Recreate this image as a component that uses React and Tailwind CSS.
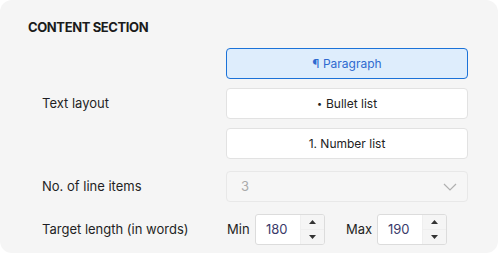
import React from "react";

function Spinner() {
  return (
    <div className="flex flex-col w-[24px] self-stretch bg-[#f5f5f5] border-l border-[#efefef]">
      <div className="flex-1 flex items-center justify-center">
        <svg width="7" height="4" viewBox="0 0 7 4"><path d="M0 4 L3.5 0 L7 4 Z" fill="#333" /></svg>
      </div>
      <div className="flex-1 flex items-center justify-center border-t border-[#efefef]">
        <svg width="7" height="4" viewBox="0 0 7 4"><path d="M0 0 L3.5 4 L7 0 Z" fill="#333" /></svg>
      </div>
    </div>
  );
}

function NumInput({ value }) {
  return (
    <div className="flex h-[31px] w-[70px] items-stretch rounded-[3px] border border-[#dcdcdc] bg-white overflow-hidden">
      <div className="flex-1 flex items-center pl-[10px] text-[13px] text-[#3a3a6a]">{value}</div>
      <Spinner />
    </div>
  );
}

export default function App() {
  return (
    <div className="w-[498px] h-[253px] bg-white" style={{ fontFamily: "Inter, 'Noto Sans', sans-serif" }}>
      <div className="w-full h-full rounded-[12px] bg-[#f5f5f5] pt-[18px] pl-[28px] text-[#1f1f24]">
        <div className="text-[13px] font-bold tracking-[-0.03em] leading-[18px] text-[#1b1b1b]">CONTENT SECTION</div>
        <div className="mt-[12px] pl-[14px] grid grid-cols-[184px_242px] gap-y-[12px] items-center">
          <div className="text-[13px]">Text layout</div>
          <div className="flex flex-col gap-[9px]">
            <div className="h-[31px] flex items-center justify-center rounded-[4px] border border-[#1b72d8] bg-[#deedfc] text-[12px] text-[#2f6ad0]">¶ Paragraph</div>
            <div className="h-[31px] flex items-center justify-center rounded-[4px] border border-[#e2e2e2] bg-white text-[12px] text-[#222]">
              <span className="text-[9px] mr-[4px]">•</span>Bullet list
            </div>
            <div className="h-[31px] flex items-center justify-center rounded-[4px] border border-[#e2e2e2] bg-white text-[12px] text-[#222]">1. Number list</div>
          </div>
          <div className="text-[13px]">No. of line items</div>
          <div className="h-[31px] flex items-center justify-between rounded-[4px] border border-[#e8e8e8] bg-[#f6f6f6] pl-[14px] pr-[10px] text-[13px] text-[#aaa]">
            <span>3</span>
            <svg width="14" height="8" viewBox="0 0 14 8"><path d="M1 1 L7 7 L13 1" fill="none" stroke="#b0b0b0" strokeWidth="1.2" /></svg>
          </div>
          <div className="text-[13px]">Target length (in words)</div>
          <div className="flex items-center">
            <span className="text-[13px] w-[29px] pl-[1px]">Min</span>
            <NumInput value="180" />
            <span className="text-[13px] ml-[21px] w-[31px]">Max</span>
            <NumInput value="190" />
          </div>
        </div>
      </div>
    </div>
  );
}
